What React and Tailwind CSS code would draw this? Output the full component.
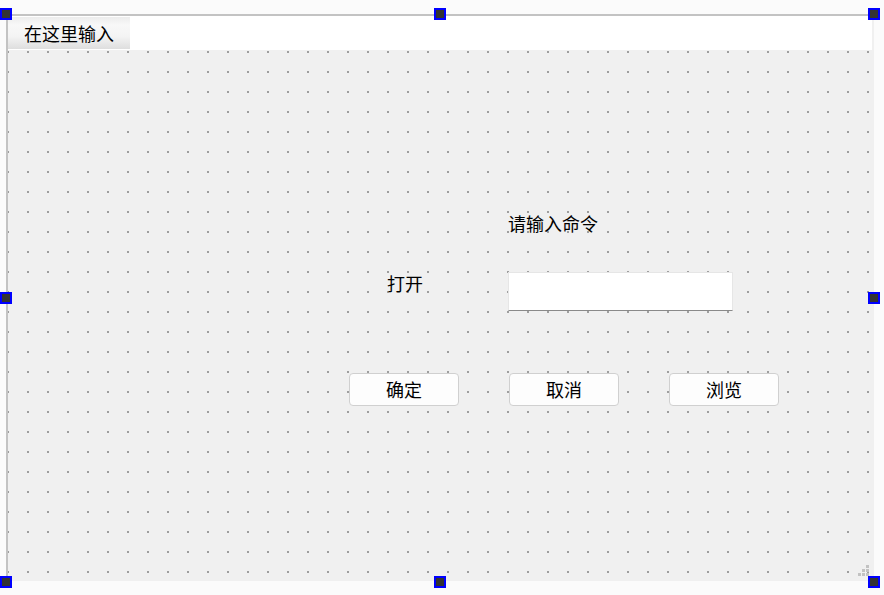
import React from "react";

const font = { fontFamily: '"Noto Sans CJK SC", "Noto Sans", sans-serif' };

function Handle({ className }) {
  return (
    <div className={`absolute w-[12px] h-[12px] bg-[#0000ff] p-[2px] ${className}`}>
      <div className="w-full h-full bg-[#333333]" />
    </div>
  );
}

function Btn({ label, className }) {
  return (
    <button
      className={`absolute h-[33px] w-[110px] rounded-[4px] border border-[#d0d0d0] bg-[#fdfdfd] text-[18px] leading-[31px] text-black text-center ${className}`}
    >
      {label}
    </button>
  );
}

export default function App() {
  return (
    <div className="relative w-[884px] h-[595px] bg-[#fbfbfb] overflow-hidden" style={font}>
      {/* form */}
      <div className="absolute left-[6px] top-[14px] w-[868px] h-[567px] border-l-2 border-t-2 border-[#c3c3c3] bg-[#f0f0f0] flex flex-col">
        {/* menubar */}
        <div className="h-[34px] mr-[2px] bg-white flex items-stretch">
          <div className="w-[122px] mt-[1px] mb-[1px] bg-[linear-gradient(to_bottom,#ececec_0%,#f8f8f8_25%,#f4f4f4_60%,#dedede_100%)] pl-[16px] text-[18px] leading-[32px] text-black">
            在这里输入
          </div>
        </div>
        {/* canvas */}
        <div className="relative flex-1">
          <svg className="absolute inset-0 w-full h-full" aria-hidden="true">
            <defs>
              <pattern id="dots" x="-1" y="1" width="20" height="20" patternUnits="userSpaceOnUse">
                <rect x="0" y="0" width="2" height="2" fill="#9e9e9e" />
              </pattern>
            </defs>
            <rect x="0" y="0" width="100%" height="100%" fill="url(#dots)" />
          </svg>
          {/* widgets placed on the designer's free canvas (offsets relative to canvas at x=8, y=50) */}
          <div className="absolute left-[500px] top-[160px] text-[18px] leading-[26px] text-black">请输入命令</div>
          <div className="absolute left-[379px] top-[220px] text-[18px] leading-[26px] text-black">打开</div>
          <div className="absolute left-[500px] top-[222px] w-[225px] h-[39px] bg-white border border-[#e6e6e6] border-b-[#8a8a8a]" />
          <Btn label="确定" className="left-[341px] top-[323px]" />
          <Btn label="取消" className="left-[501px] top-[323px]" />
          <Btn label="浏览" className="left-[661px] top-[323px]" />
          {/* resize grip */}
          <svg className="absolute right-[4px] bottom-[4px] w-[12px] h-[12px]" viewBox="0 0 12 12" aria-hidden="true">
            <rect x="8" y="0" width="3" height="3" fill="#c2c2c2" />
            <rect x="4" y="4" width="3" height="3" fill="#c2c2c2" />
            <rect x="8" y="4" width="3" height="3" fill="#c2c2c2" />
            <rect x="0" y="8" width="3" height="3" fill="#c2c2c2" />
            <rect x="4" y="8" width="3" height="3" fill="#c2c2c2" />
            <rect x="8" y="8" width="3" height="3" fill="#c2c2c2" />
          </svg>
        </div>
      </div>

      {/* selection handles */}
      <Handle className="left-[0px] top-[8px]" />
      <Handle className="left-[434px] top-[8px]" />
      <Handle className="left-[868px] top-[8px]" />
      <Handle className="left-[0px] top-[292px]" />
      <Handle className="left-[868px] top-[292px]" />
      <Handle className="left-[0px] top-[576px]" />
      <Handle className="left-[434px] top-[576px]" />
      <Handle className="left-[868px] top-[576px]" />
    </div>
  );
}
